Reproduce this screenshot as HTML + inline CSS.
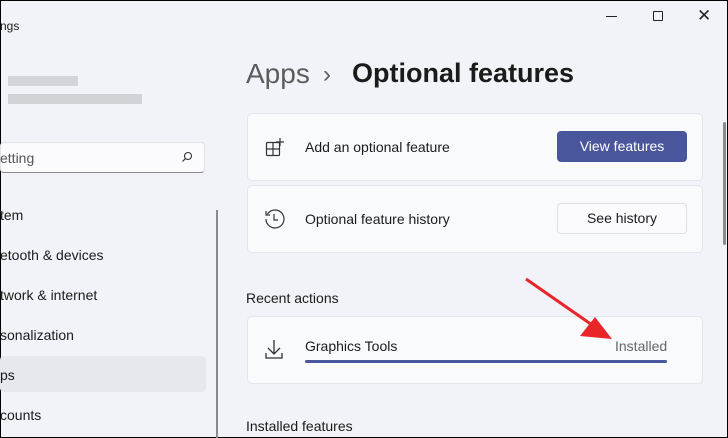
<!DOCTYPE html><html><head><style>
body{margin:0;width:728px;height:438px;overflow:hidden;background:#f1f3f8;font-family:"Liberation Sans",sans-serif;position:relative;color:#1b1b1b}
.a{position:absolute}
.card{position:absolute;left:247px;width:456px;background:#f9fafc;border:1px solid #e4e6eb;border-radius:5px;box-sizing:border-box}
.t{font-size:14px}
.nav{position:absolute;left:0;font-size:14px}
</style></head><body>
<div class="a" style="left:0;top:0;width:726px;height:436px;border:1px solid #000"></div>
<div class="a" style="left:0;top:19px;font-size:12px">ngs</div>
<div class="a" style="left:8px;top:76px;width:70px;height:10px;background:#c8c8cc;opacity:.7"></div>
<div class="a" style="left:8px;top:94px;width:134px;height:10px;background:#c4c4c8;opacity:.7"></div>
<div class="a" style="left:0;top:142px;width:205px;height:31px;background:#fbfbfd;border:1px solid #e2e2e6;border-bottom-color:#8a8a8a;border-radius:4px;box-sizing:border-box"></div>
<div class="a" style="left:0;top:150px;font-size:14px;color:#555">etting</div>
<svg class="a" style="left:181px;top:151px" width="12" height="12" viewBox="0 0 12 12"><circle cx="7" cy="5" r="3.5" fill="none" stroke="#333" stroke-width="1.1"/><path d="M4.5 7.5L1.5 10.5" stroke="#333" stroke-width="1.2"/></svg>
<div class="a" style="left:216px;top:210px;width:2px;height:228px;background:#8a8a8a"></div>
<div class="a" style="left:0;top:356px;width:206px;height:36px;background:#e6e8ee;border-radius:4px"></div>
<div class="nav" style="top:207px">tem</div>
<div class="nav" style="top:247px">etooth &amp; devices</div>
<div class="nav" style="top:287px">twork &amp; internet</div>
<div class="nav" style="top:327px">sonalization</div>
<div class="nav" style="top:367px">ps</div>
<div class="nav" style="top:407px">counts</div>
<div class="a" style="left:606px;top:16px;width:11px;height:1px;background:#222"></div>
<div class="a" style="left:653px;top:11px;width:8px;height:8px;border:1px solid #222;border-radius:1px"></div>
<div class="a" style="left:697px;top:6px;font-size:17px;color:#222">✕</div>
<div class="a" style="left:246px;top:58px;font-size:28px;color:#5c5c5c;white-space:nowrap">Apps<span style="position:absolute;left:77px;top:3px;font-size:24px">›</span><span style="position:absolute;left:106px;color:#1b1b1b;font-weight:bold;font-size:27px">Optional features</span></div>
<div class="a" style="left:723px;top:122px;width:3px;height:123px;background:#8a8a8a;border-radius:2px"></div>
<div class="card" style="top:113px;height:68px"></div>
<svg class="a" style="left:265px;top:137px" width="21" height="21" viewBox="0 0 21 21" fill="none" stroke="#333" stroke-width="1.2"><rect x="1.5" y="5.5" width="13" height="13" rx="1"/><path d="M8 5.5v13M1.5 12h13M15 1v8M11 5h8"/></svg>
<div class="a t" style="left:305px;top:139px">Add an optional feature</div>
<div class="a" style="left:557px;top:131px;width:130px;height:31px;background:#4a569c;border-radius:4px;color:#fff;font-size:14px;line-height:31px;text-align:center">View features</div>
<div class="card" style="top:185px;height:68px"></div>
<svg class="a" style="left:264px;top:208px" width="22" height="22" viewBox="0 0 22 22" fill="none" stroke="#333" stroke-width="1.2"><path d="M3.5 6A9 9 0 1 1 2 11"/><path d="M2 3v4h4"/><path d="M10 6v6h4"/></svg>
<div class="a t" style="left:305px;top:211px">Optional feature history</div>
<div class="a" style="left:557px;top:203px;width:130px;height:31px;background:#fbfbfd;border:1px solid #e0e0e4;box-sizing:border-box;border-radius:4px;font-size:14px;line-height:29px;text-align:center">See history</div>
<div class="a" style="left:246px;top:290px;font-size:14px">Recent actions</div>
<div class="card" style="top:316px;height:68px"></div>
<svg class="a" style="left:265px;top:338px" width="18" height="22" viewBox="0 0 18 22" fill="none" stroke="#333" stroke-width="1.3"><path d="M9 2v14M3 10l6 6 6-6M1 15v5h16v-5"/></svg>
<div class="a t" style="left:305px;top:338px">Graphics Tools</div>
<div class="a t" style="left:615px;top:338px;color:#666">Installed</div>
<div class="a" style="left:305px;top:360px;width:362px;height:3px;background:#4a569c;border-radius:2px"></div>
<svg class="a" style="left:520px;top:275px" width="100" height="70" viewBox="0 0 100 70"><path d="M6 4L75 52" stroke="#e8262a" stroke-width="3"/><path d="M92 64L60 61L75 42Z" fill="#e8262a"/></svg>
<div class="a" style="left:246px;top:418px;font-size:14px">Installed features</div>
</body></html>
